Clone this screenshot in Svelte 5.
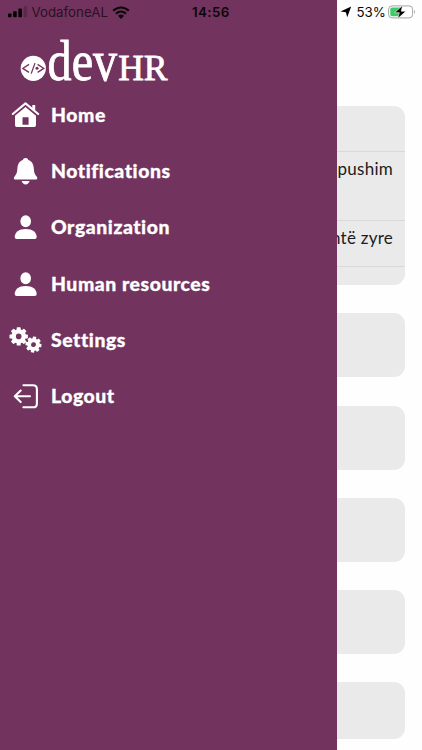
<script>
  const items = [
    { label: 'Home', icon: 'home' },
    { label: 'Notifications', icon: 'bell' },
    { label: 'Organization', icon: 'user' },
    { label: 'Human resources', icon: 'user' },
    { label: 'Settings', icon: 'gears' },
    { label: 'Logout', icon: 'logout' }
  ]

  const teeth = [0, 45, 90, 135, 180, 225, 270, 315]
</script>

{#snippet gear(x, y, scale, turn)}
  <g transform={`translate(${x} ${y}) scale(${scale}) rotate(${turn})`}>
    <circle r="5" fill="none" stroke="#fff" stroke-width="4.4" />
    {#each teeth as angle}
      <rect x="-2" y="-9.2" width="4" height="4" rx="0.7" transform={`rotate(${angle})`} />
    {/each}
  </g>
{/snippet}

<div class="screen">
  <main class="content">
    <section class="card details">
      <div class="row head"></div>
      <div class="row tall">pushim</div>
      <div class="row">ntë zyre</div>
    </section>
    <section class="card"></section>
    <section class="card"></section>
    <section class="card"></section>
    <section class="card"></section>
    <section class="card last"></section>
  </main>

  <aside class="drawer">
    <svg class="logo" viewBox="0 0 160 62" role="img" aria-label="devHR">
      <circle cx="13.3" cy="44.3" r="12.6" />
      <g class="mark">
        <path d="M9 40.4 L2.8 44.4 L9 48.4 M17.6 40.4 L23.8 44.4 L17.6 48.4 M15 39.1 L11.2 49.6" />
        <circle cx="17" cy="44.3" r="1.5" />
      </g>
      <text x="27.6" y="56.2" font-size="56" textLength="69.6" lengthAdjust="spacingAndGlyphs">dev</text>
      <text x="98.2" y="56.2" font-size="35.5" textLength="49.4" lengthAdjust="spacingAndGlyphs">HR</text>
    </svg>

    <nav>
      {#each items as item}
        <a class="item" href="#top">
          <svg class="icon" viewBox="0 0 34 30" aria-hidden="true">
            {#if item.icon === 'home'}
              <path d="M7 15.8 L17.5 6.9 L28 15.8 V25.2 Q28 27 26.2 27 H8.8 Q7 27 7 25.2 Z M14.5 17.3 V24.7 H20.6 V17.3 Z" fill-rule="evenodd" />
              <path class="roof" d="M4.8 14 L17.5 3.4 L30.2 14" />
              <path d="M24.3 5 H27.2 V11.5 L24.3 9 Z" />
            {:else if item.icon === 'bell'}
              <path d="M17.6 2 C16.1 2 15.1 2.9 14.9 4.1 C11.3 5.3 9.7 8.4 9.4 12.3 C9.1 17.3 8.2 18.7 6.6 20.4 C5.2 22 6.1 23.6 7.6 23.6 H27.6 C29.1 23.6 30 22 28.6 20.4 C27 18.7 26.1 17.3 25.8 12.3 C25.5 8.4 23.9 5.3 20.3 4.1 C20.1 2.9 19.1 2 17.6 2 Z" />
              <path d="M13.6 25.1 H21.6 C20.8 27.5 19.4 28.5 17.6 28.5 C15.8 28.5 14.4 27.5 13.6 25.1 Z" />
            {:else if item.icon === 'user'}
              <ellipse cx="17.7" cy="9.2" rx="5.3" ry="6" />
              <path d="M6.7 25.1 C6.7 20.5 10.8 17 17.7 17 C24.6 17 28.7 20.5 28.7 25.1 Q28.7 27.1 26.7 27.1 H8.7 Q6.7 27.1 6.7 25.1 Z" />
            {:else if item.icon === 'gears'}
              {@render gear(10.7, 11.4, 1, 0)}
              {@render gear(25.5, 19.6, 0.87, 8)}
            {:else}
              <path class="line" d="M15.4 4.2 H25 Q28.9 4.2 28.9 8.1 V22.4 Q28.9 26.3 25 26.3 H15.4 M22 15.3 H7 M12.7 9.5 L6.8 15.3 L12.7 21.1" />
            {/if}
          </svg>
          <span>{item.label}</span>
        </a>
      {/each}
    </nav>
  </aside>

  <header class="status">
    <svg class="signal" viewBox="0 0 20 12" aria-hidden="true">
      <rect x="0" y="7.4" width="3.5" height="3.8" rx="0.8" />
      <rect x="5.2" y="5.3" width="3.5" height="5.9" rx="0.8" />
      <rect x="10.4" y="2.6" width="3.5" height="8.6" rx="0.8" />
      <rect x="15.6" y="0" width="3.5" height="11.2" rx="0.8" opacity="0.2" />
    </svg>
    <span class="carrier">VodafoneAL</span>
    <svg class="wifi" viewBox="0 0 18 13" aria-hidden="true">
      <path d="M1.2 4.8 C5.8 0.4 12.2 0.4 16.8 4.8 M4 7.8 C7 5 11 5 14 7.8" />
      <path class="dot" d="M6 9.8 Q9 7.3 12 9.8 L9 12.9 Z" />
    </svg>
    <span class="time">14:56</span>
    <svg class="arrow" viewBox="0 0 12 12" aria-hidden="true">
      <path d="M11.2 0.6 L7.2 11.2 L5.9 6.3 L0.5 5.4 Z" />
    </svg>
    <span class="percent">53%</span>
    <svg class="battery" viewBox="0 0 29 14" aria-hidden="true">
      <rect class="case" x="0.6" y="0.9" width="24" height="12" rx="3.4" />
      <rect class="charge" x="2.3" y="2.6" width="11" height="8.6" rx="1.6" />
      <path class="tip" d="M26.1 4.8 Q28 6.9 26.1 9 Z" />
      <path class="bolt" d="M14.6 0.4 L6.6 7.7 H11.3 L9.7 13.6 L18 6.2 H13.2 Z" />
    </svg>
  </header>
</div>

<style>
  :global(body) {
    margin: 0;
    background: #fefefe;
  }

  .screen {
    position: relative;
    width: 422px;
    height: 750px;
    overflow: hidden;
    background: #fefefe;
    font-family: Lato, 'Liberation Sans', sans-serif;
  }

  .content {
    display: flex;
    flex-direction: column;
    gap: 28.2px;
    padding: 106px 17px 0 18px;
  }

  .card {
    flex: none;
    height: 64px;
    border-radius: 11px;
    background: #eaeaea;
  }

  .card.details {
    height: 179.3px;
  }

  .card.last {
    height: 56.5px;
  }

  .row {
    box-sizing: border-box;
    height: 46.5px;
    padding: 5px 12px 0 0;
    border-bottom: 1.5px solid #d9d9dc;
    color: #1c1c1c;
    font-size: 17px;
    line-height: 24px;
    letter-spacing: 0.25px;
    text-align: right;
  }

  .row.head {
    height: 46px;
  }

  .row.tall {
    height: 68.5px;
  }

  .drawer {
    position: absolute;
    inset: 0 auto 0 0;
    box-sizing: border-box;
    width: 337.4px;
    padding-top: 24px;
    background: #72345e;
  }

  .logo {
    display: block;
    width: 160px;
    height: 62px;
    margin-left: 20px;
    overflow: visible;
    fill: #fff;
    font-family: 'Liberation Serif', serif;
  }

  .logo text {
    stroke: #fff;
    stroke-width: 0.8;
  }

  .mark path {
    fill: none;
    stroke: #72345e;
    stroke-width: 1.3;
  }

  .mark circle {
    fill: #72345e;
  }

  nav {
    display: flex;
    flex-direction: column;
    gap: 26.2px;
    padding: 14px 0 0 8px;
  }

  .item {
    display: flex;
    align-items: center;
    gap: 9px;
    height: 30px;
    color: #fff;
    font-size: 19.4px;
    font-weight: 900;
    letter-spacing: 0.55px;
    line-height: 30px;
    text-decoration: none;
    white-space: nowrap;
    -webkit-text-stroke: 0.3px #fff;
  }

  .icon {
    flex: none;
    width: 34px;
    height: 30px;
    fill: #fff;
  }

  .roof,
  .line {
    fill: none;
    stroke: #fff;
    stroke-width: 2.1;
    stroke-linecap: round;
    stroke-linejoin: round;
  }

  .status {
    position: absolute;
    inset: 0 0 auto 0;
    display: flex;
    align-items: center;
    height: 24px;
    padding-left: 8px;
    color: #0c060a;
    font-family: Inter, 'Liberation Sans', sans-serif;
    font-size: 13.3px;
    line-height: 24px;
  }

  .status svg,
  .status span {
    flex: none;
  }

  .signal {
    width: 20px;
    height: 12px;
  }

  .carrier {
    width: 80.5px;
    padding-left: 3.5px;
    color: #2b1023;
  }

  .wifi {
    width: 18px;
    height: 13px;
  }

  .wifi path {
    fill: none;
    stroke: #0c060a;
    stroke-width: 2.2;
  }

  .wifi .dot {
    fill: #0c060a;
    stroke: none;
  }

  .time {
    width: 149.5px;
    padding-left: 62px;
    box-sizing: border-box;
    font-weight: 600;
    letter-spacing: 0.4px;
  }

  .arrow {
    width: 12px;
    height: 12px;
    margin-left: 60px;
  }

  .percent {
    width: 31.5px;
    padding-left: 5px;
  }

  .battery {
    width: 29px;
    height: 14px;
  }

  .case {
    fill: #fff;
    stroke: #a4a4a4;
  }

  .charge {
    fill: #3ecb65;
  }

  .tip {
    fill: #a4a4a4;
  }

  .bolt {
    fill: #000;
    stroke: #fff;
    stroke-width: 0.6;
  }
</style>
